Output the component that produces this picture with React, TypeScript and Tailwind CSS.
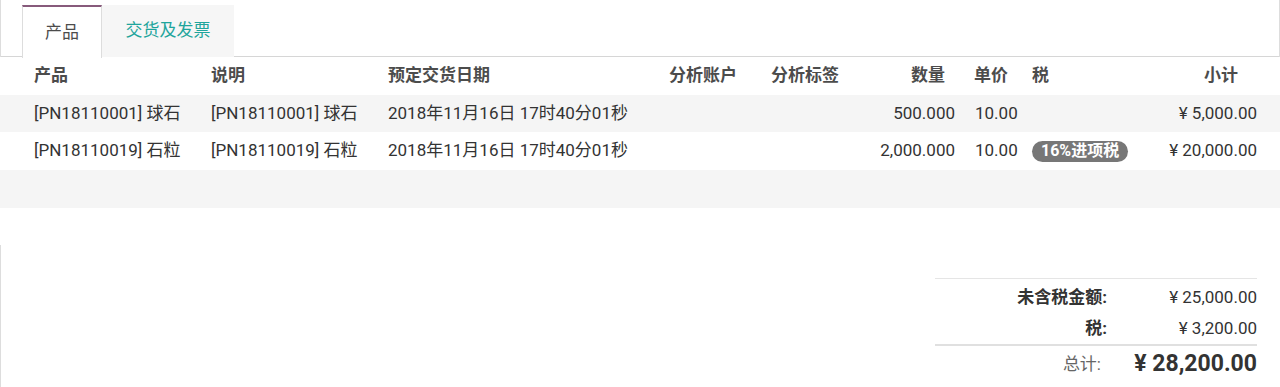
import React from 'react';

const font = "font-['Roboto','Noto_Sans_CJK_SC',sans-serif]";

const cols = 'grid grid-cols-[211px_177px_281px_102px_89px_95px_77px_108px_1fr] pr-[23px]';

const lines = [
    { product: '[PN18110001] 球石', desc: '[PN18110001] 球石', date: '2018年11月16日 17时40分01秒', qty: '500.000', price: '10.00', tax: '', subtotal: '¥ 5,000.00' },
    { product: '[PN18110019] 石粒', desc: '[PN18110019] 石粒', date: '2018年11月16日 17时40分01秒', qty: '2,000.000', price: '10.00', tax: '16%进项税', subtotal: '¥ 20,000.00' },
];

const App: React.FC = () => {
    return (
        <div className={`${font} w-[1280px] h-[387px] bg-white overflow-hidden text-[#333]`}>
            {/* Tabs */}
            <div className="h-[57px] border-l border-r border-[#ddd] flex items-end">
                <div className="flex-1 h-[52px] flex border-b border-[#d6d6d6] pl-[21px]">
                    <div className="w-[80px] h-[53px] -mb-px bg-white border-t-2 border-t-[#875a7b] border-x border-x-[#ddd] flex items-center justify-center text-[17px] text-[#4c4c4c]">
                        产品
                    </div>
                    <div className="w-[132px] h-[52px] bg-[#f6f6f6] flex items-center justify-center text-[17px] text-[#1fa59c]">
                        交货及发票
                    </div>
                </div>
            </div>

            {/* Order lines */}
            <div className="text-[17px]">
                <div className={`${cols} h-[38px] items-center font-bold text-[#4c4c4c]`}>
                    <div className="pl-[34px]">产品</div>
                    <div>说明</div>
                    <div>预定交货日期</div>
                    <div>分析账户</div>
                    <div>分析标签</div>
                    <div className="text-right pr-[10px]">数量</div>
                    <div className="pl-[19px]">单价</div>
                    <div>税</div>
                    <div className="text-right pr-[19px]">小计</div>
                </div>
                {lines.map((l, i) => (
                    <div key={i} className={`${cols} ${i === 0 ? 'h-[37px] bg-[#f5f5f5]' : 'h-[38px] bg-white'} items-center`}>
                        <div className="pl-[34px] whitespace-nowrap">{l.product}</div>
                        <div className="whitespace-nowrap">{l.desc}</div>
                        <div className="whitespace-nowrap">{l.date}</div>
                        <div></div>
                        <div></div>
                        <div className="text-right">{l.qty}</div>
                        <div className="pl-[20px]">{l.price}</div>
                        <div>
                            {l.tax && (
                                <span className="inline-flex items-center h-[21px] px-[9px] rounded-full bg-[#777] text-white font-bold text-[16px] whitespace-nowrap">
                                    {l.tax}
                                </span>
                            )}
                        </div>
                        <div className="text-right whitespace-nowrap">{l.subtotal}</div>
                    </div>
                ))}
                <div className="h-[38px] bg-[#f5f5f5]"></div>
                <div className="h-[37px]"></div>
            </div>

            {/* Totals */}
            <div className="h-[142px] border-l border-[#ddd] flex justify-end pr-[23px] pt-[33px]">
                <div className="w-[322px] border-t border-[#e5e5e5] pt-[3px] text-[17px]">
                    <div className="grid grid-cols-[1fr_150px] h-[31px] items-center">
                        <div className="text-right font-bold text-[#333]">未含税金额:</div>
                        <div className="text-right">¥ 25,000.00</div>
                    </div>
                    <div className="grid grid-cols-[1fr_150px] h-[31px] items-center">
                        <div className="text-right font-bold text-[#333]">税:</div>
                        <div className="text-right">¥ 3,200.00</div>
                    </div>
                    <div className="grid grid-cols-[1fr_150px] h-[39px] items-center border-t-2 border-[#e0e0e0]">
                        <div className="text-right text-[#666] pr-[6px]">总计:</div>
                        <div className="text-right font-bold text-[23px] text-[#333]">¥ 28,200.00</div>
                    </div>
                </div>
            </div>
        </div>
    );
};

export default App;
